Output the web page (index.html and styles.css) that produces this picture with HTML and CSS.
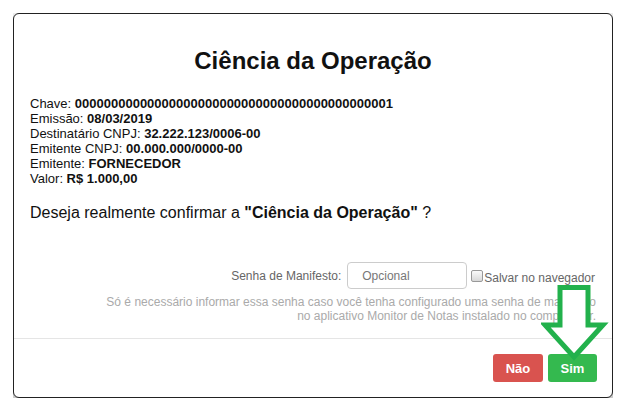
FILE: index.html
```html
<!DOCTYPE html>
<html lang="pt-BR">
<head>
  <meta charset="UTF-8">
  <title>Ciência da Operação</title>
  <link rel="stylesheet" href="styles.css">
</head>
<body>
  <div class="modal">
    <div class="modal-body">
      <h1>Ciência da Operação</h1>
      <div class="info">
        <div>Chave: <b>00000000000000000000000000000000000000000001</b></div>
        <div>Emissão: <b>08/03/2019</b></div>
        <div>Destinatário CNPJ: <b>32.222.123/0006-00</b></div>
        <div>Emitente CNPJ: <b>00.000.000/0000-00</b></div>
        <div>Emitente: <b>FORNECEDOR</b></div>
        <div>Valor: <b>R$ 1.000,00</b></div>
      </div>
      <p class="question">Deseja realmente confirmar a <b>"Ciência da Operação"</b> ?</p>

      <div class="senha-row">
        <label for="senha">Senha de Manifesto:</label>
        <input type="password" id="senha" placeholder="Opcional">
        <label class="salvar"><input type="checkbox" id="salvar">Salvar no navegador</label>
      </div>
      <div class="help">
        Só é necessário informar essa senha caso você tenha configurado uma senha de manifesto<br>
        no aplicativo Monitor de Notas instalado no computador.
      </div>
    </div>
    <div class="modal-footer">
      <button class="btn btn-nao">Não</button>
      <button class="btn btn-sim">Sim</button>
    </div>

    <svg class="arrow" width="70" height="80" viewBox="0 0 70 80">
      <polygon points="19,4.5 47,4.5 47,42 62,42 33,74 4,42 19,42"
               fill="#fff" stroke="#22b14c" stroke-width="5" stroke-linejoin="miter"/>
    </svg>
  </div>
</body>
</html>
```

FILE: styles.css
```css
body {
  margin: 13px;
  background: #fff;
  font-family: "Liberation Sans", Arial, sans-serif;
  color: #222;
}

.modal {
  position: relative;
  width: 600px;
  box-sizing: border-box;
  border: 1px solid #222;
  border-radius: 6px;
  background: #fff;
  box-shadow: 0 5px 15px rgba(0,0,0,0.5);
}

.modal-body {
  padding: 33px 16px 15px;
}

h1 {
  margin: 0;
  text-align: center;
  font-size: 24px;
  line-height: 28px;
  color: #111;
}

.info {
  margin-top: 21px;
  font-size: 13px;
  line-height: 15px;
  color: #111;
}

.question {
  margin: 17px 0 0;
  font-size: 16px;
  line-height: 20px;
  color: #111;
}

.senha-row {
  margin-top: 39px;
  display: flex;
  justify-content: flex-end;
  align-items: center;
  font-size: 12px;
  line-height: 14px;
  color: #666;
}

.senha-row input[type="password"] {
  width: 120px;
  height: 27px;
  box-sizing: border-box;
  margin-left: 6px;
  padding: 0 0 0 14px;
  border: 1px solid #ccc;
  border-radius: 4px;
  font-family: inherit;
  font-size: 12px;
  color: #555;
}

.senha-row input::placeholder {
  color: #777;
}

.salvar {
  align-self: flex-end;
  margin-bottom: 4px;
  margin-right: 1px;
}

.salvar input {
  appearance: none;
  width: 12px;
  height: 12px;
  margin: 0 1px 0 4px;
  border: 1px solid #999;
  border-radius: 2px;
  background: linear-gradient(#fafafa, #d8d8d8);
  vertical-align: baseline;
}

.help {
  margin-top: 6px;
  text-align: right;
  font-size: 12px;
  line-height: 14px;
  color: #aaa;
}

.modal-footer {
  border-top: 1px solid #e5e5e5;
  padding: 15px;
  display: flex;
  justify-content: flex-end;
  gap: 5px;
}

.btn {
  height: 28px;
  padding: 0 12px;
  border: none;
  border-radius: 3px;
  font-family: inherit;
  font-size: 13px;
  font-weight: bold;
  color: #fff;
}

.btn-nao {
  width: 50px;
  background: #d9534f;
}

.btn-sim {
  width: 49px;
  background: #34b94f;
}

/* seta desenhada por cima do conteúdo */
.arrow {
  position: absolute;
  left: 527px;
  top: 269px;
}
```
